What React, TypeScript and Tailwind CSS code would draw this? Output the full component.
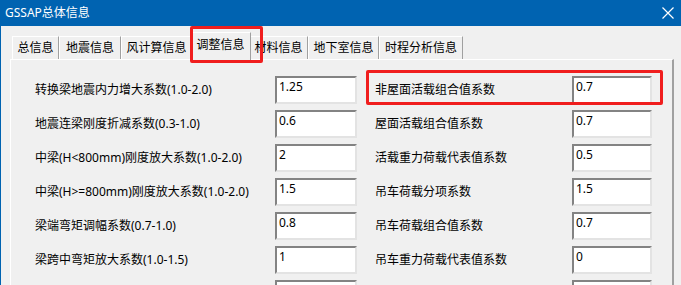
const tabs = [
  { name: "总信息", w: "w-[47px]" },
  { name: "地震信息", w: "w-[62px]" },
  { name: "风计算信息", w: "w-[71px]" },
  { name: "调整信息", w: "w-[61px]", active: true },
  { name: "材料信息", w: "w-[59px]" },
  { name: "地下室信息", w: "w-[71px]" },
  { name: "时程分析信息", w: "w-[84px]" },
]

const rows = [
  ["转换梁地震内力增大系数(1.0-2.0)", "1.25", "非屋面活载组合值系数", "0.7"],
  ["地震连梁刚度折减系数(0.3-1.0)", "0.6", "屋面活载组合值系数", "0.7"],
  ["中梁(H<800mm)刚度放大系数(1.0-2.0)", "2", "活载重力荷载代表值系数", "0.5"],
  ["中梁(H>=800mm)刚度放大系数(1.0-2.0)", "1.5", "吊车荷载分项系数", "1.5"],
  ["梁端弯矩调幅系数(0.7-1.0)", "0.8", "吊车荷载组合值系数", "0.7"],
  ["梁跨中弯矩放大系数(1.0-1.5)", "1", "吊车重力荷载代表值系数", "0"],
  ["", "", "", ""],
]

function Field({ value, w }: { value: string; w: string }) {
  return (
    <div
      className={`${w} h-[28px] shrink-0 bg-white border-2 border-t-[#838383] border-l-[#838383] border-r-[#e3e3e3] border-b-[#e3e3e3] pl-[2px] pt-[1px] leading-[16px]`}
    >
      {value}
    </div>
  )
}

export default function App() {
  return (
    <div className="relative w-[681px] h-[285px] overflow-hidden bg-[#f0f0f0] border-l border-[#0063b1] text-[12px] text-black font-['Noto_Sans','Noto_Sans_CJK_SC',sans-serif]">
      {/* Title bar */}
      <div className="h-[26px] bg-[#0063b1] flex items-center justify-between pl-[4px] pr-[6px] text-white">
        <span className="leading-[16px]">GSSAP总体信息</span>
        <svg width="12" height="12" viewBox="0 0 12 12" className="mr-[1px]">
          <path d="M0.5 0.5L11.5 11.5M11.5 0.5L0.5 11.5" stroke="white" strokeWidth="1.2" />
        </svg>
      </div>

      {/* Tabs */}
      <div className="relative z-10 flex items-end pl-[11px] pt-[6px] h-[33px]">
        {tabs.map((t) =>
          t.active ? (
            <div
              key={t.name}
              className={`${t.w} h-[28px] -mb-[1px] -mx-[2px] px-[2px] bg-[#f0f0f0] border-t border-l border-white border-r border-r-[#a0a0a0] flex items-start justify-center pt-[4px] leading-[16px] z-10`}
            >
              {t.name}
            </div>
          ) : (
            <div
              key={t.name}
              className={`${t.w} h-[23px] bg-[#f0f0f0] border-t border-l border-white border-r border-r-[#a0a0a0] flex items-center justify-center leading-[16px]`}
            >
              {t.name}
            </div>
          )
        )}
      </div>

      {/* Panel */}
      <div className="ml-[9px] w-[664px] h-[240px] border-t border-l border-white border-r-2 border-r-[#a0a0a0] pl-[24px] pt-[16px]">
        <div className="flex flex-col gap-[6px]">
          {rows.map((r, i) => (
            <div key={i} className="flex items-center h-[28px]">
              <div className="w-[240px] shrink-0 leading-[16px] whitespace-nowrap">{r[0]}</div>
              <Field value={r[1]} w="w-[82px]" />
              <div className="w-[197px] ml-[18px] shrink-0 leading-[16px] whitespace-nowrap">{r[2]}</div>
              <Field value={r[3]} w="w-[80px]" />
            </div>
          ))}
        </div>
      </div>

      {/* Red highlight annotations */}
      <div className="absolute left-[189px] top-[26px] w-[73px] h-[37px] border-[3px] border-[#f01e1e] rounded-[2px] z-20" />
      <div className="absolute left-[365px] top-[70px] w-[297px] h-[35px] border-[3px] border-[#f01e1e] rounded-[2px] z-20" />
    </div>
  )
}
